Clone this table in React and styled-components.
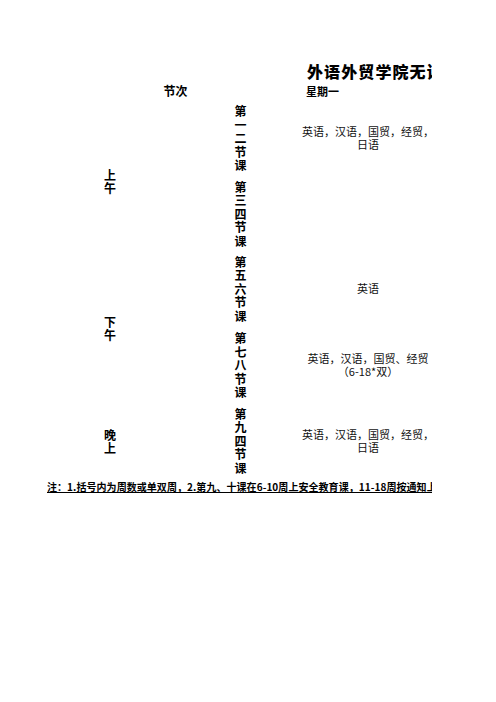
import React from "react";
import styled, { createGlobalStyle } from "styled-components";

const GlobalStyle = createGlobalStyle`
  html, body {
    margin: 0;
    padding: 0;
    background: #fff;
  }
  body {
    font-family: "Noto Sans CJK SC", "Liberation Sans", sans-serif;
    color: #000;
  }
`;

const periods = [
  { label: "上午", row: 3, span: 2, shift: 5 },
  { label: "下午", row: 5, span: 2, shift: 0 },
  { label: "晚上", row: 7, span: 1, shift: 0 },
];

const lessons = [
  { text: "第一二节课", courses: ["英语，汉语，国贸，经贸，", "日语"] },
  { text: "第三四节课", courses: [] },
  { text: "第五六节课", courses: ["英语"] },
  { text: "第七八节课", courses: ["英语，汉语，国贸、经贸", "（6-18*双）"] },
  { text: "第九四节课", courses: ["英语，汉语，国贸，经贸，", "日语"] },
];

const App = () => {
  return (
    <>
      <GlobalStyle />
      <Page>
        <Sheet>
          <Title>外语外贸学院无课表</Title>
          <HeadCell $col="1 / 3">节次</HeadCell>
          <HeadCell $col="3" $left>
            星期一
          </HeadCell>
          {periods.map((p) => (
            <PeriodCell key={p.label} $row={p.row} $span={p.span} $shift={p.shift}>
              <Stack>{p.label}</Stack>
            </PeriodCell>
          ))}
          {lessons.map((l, i) => (
            <React.Fragment key={l.text}>
              <LessonCell $row={i + 3}>
                <Stack $tight>{l.text}</Stack>
              </LessonCell>
              <CourseCell $row={i + 3}>
                {l.courses.map((c) => (
                  <CourseLine key={c}>{c}</CourseLine>
                ))}
              </CourseCell>
            </React.Fragment>
          ))}
          <Note>
            注：1.括号内为周数或单双周，2.第九、十课在6-10周上安全教育课，11-18周按通知上课
          </Note>
        </Sheet>
      </Page>
    </>
  );
};

export default App;

const Page = styled.div`
  width: 496px;
  height: 702px;
  padding: 61px 0 0 47px;
  box-sizing: border-box;
`;
const Sheet = styled.div`
  display: grid;
  grid-template-columns: 126px 131px 128px;
  grid-template-rows: 20px 19px 76px 75px 75px 78px 73px 20px;
`;
const Title = styled.div`
  grid-column: 3;
  grid-row: 1;
  overflow: hidden;
  white-space: nowrap;
  padding-left: 3px;
  font-size: 16px;
  font-weight: 900;
  letter-spacing: 1.1px;
  line-height: 20px;
`;
const HeadCell = styled.div`
  grid-column: ${(p) => p.$col};
  grid-row: 2;
  display: flex;
  align-items: center;
  justify-content: ${(p) => (p.$left ? "flex-start" : "center")};
  padding-left: ${(p) => (p.$left ? "2px" : "0")};
  font-size: ${(p) => (p.$left ? "11px" : "12px")};
  font-weight: 700;
  white-space: nowrap;
`;
const PeriodCell = styled.div`
  grid-column: 1;
  grid-row: ${(p) => p.$row} / span ${(p) => p.$span};
  display: flex;
  align-items: center;
  justify-content: center;
  padding-top: ${(p) => p.$shift * 2}px;
  font-size: 12px;
  font-weight: 700;
`;
const Stack = styled.div`
  width: 1em;
  line-height: ${(p) => (p.$tight ? "13.6px" : "13px")};
  word-break: break-all;
  text-align: center;
`;
const LessonCell = styled.div`
  grid-column: 2;
  grid-row: ${(p) => p.$row};
  display: flex;
  align-items: center;
  justify-content: center;
  padding-left: 4px;
  font-size: 12px;
  font-weight: 700;
`;
const CourseCell = styled.div`
  grid-column: 3;
  grid-row: ${(p) => p.$row};
  display: flex;
  flex-direction: column;
  align-items: center;
  justify-content: center;
  font-size: 11px;
  line-height: 13px;
  color: #111;
`;
const CourseLine = styled.div`
  white-space: nowrap;
`;
const Note = styled.div`
  grid-column: 1 / 4;
  grid-row: 8;
  overflow: hidden;
  white-space: nowrap;
  font-size: 10px;
  font-weight: 700;
  letter-spacing: 0.06px;
  line-height: 20px;
  text-decoration: underline;
  text-underline-offset: 1px;
`;
